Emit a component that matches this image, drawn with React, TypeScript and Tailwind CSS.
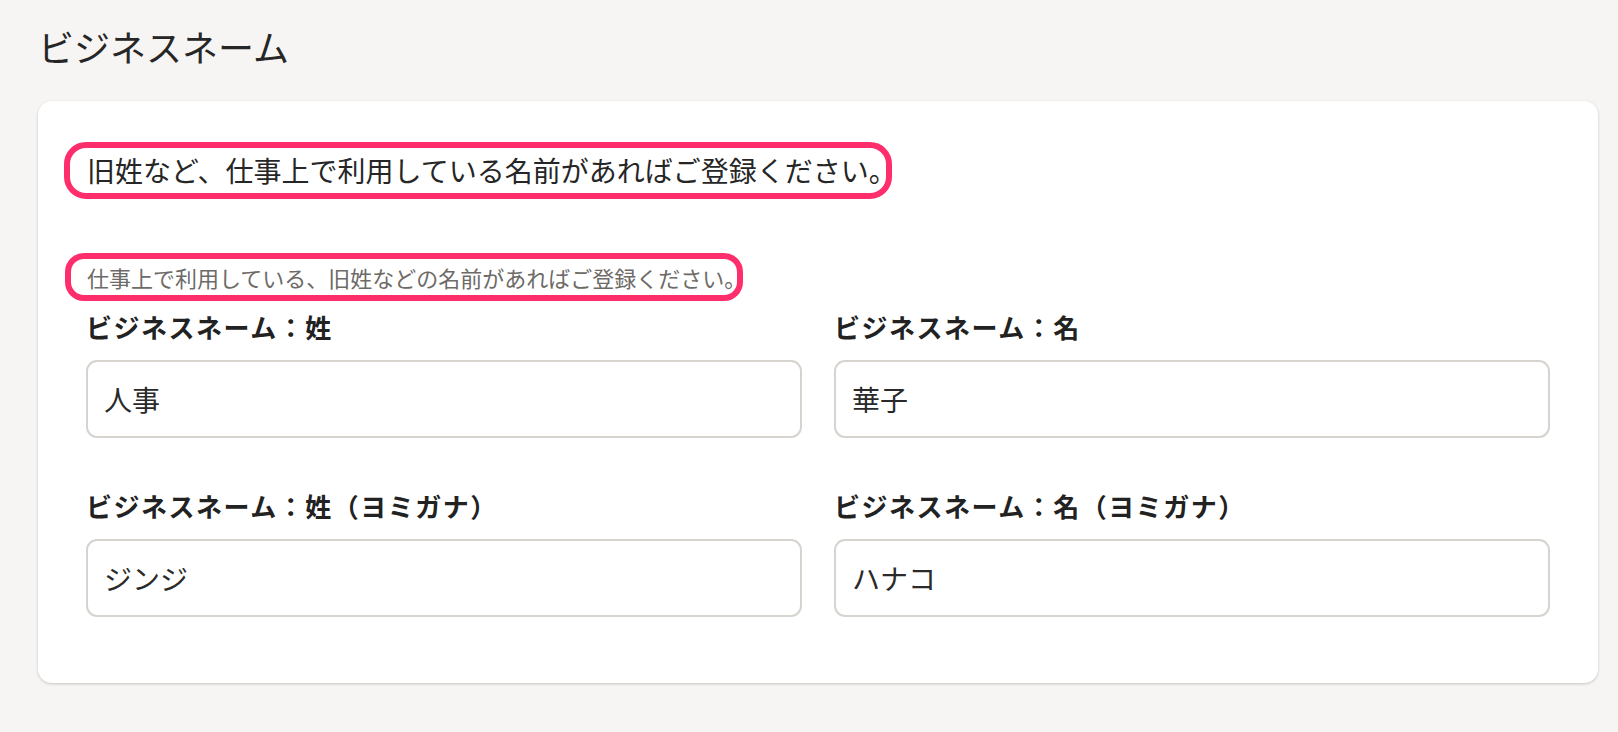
import React from "react";

const font = { fontFamily: '"Noto Sans CJK JP", "Noto Sans", sans-serif' };

function Field({ label, value }: { label: string; value: string }) {
  return (
    <div className="flex flex-col">
      <div className="text-[26px] font-bold leading-[36px] text-[#222222] tracking-[1.5px] whitespace-nowrap">{label}</div>
      <div className="mt-[15px] h-[78px] rounded-[11px] border-2 border-[#d7d3cf] bg-white pl-[16px] flex items-center text-[28px] text-[#2a2a2a]">
        {value}
      </div>
    </div>
  );
}

export default function App() {
  return (
    <div className="min-h-[732px] w-full bg-[#f6f5f3] pl-[38px] pr-[20px] pt-[22px] pb-[48px]" style={font}>
      <h1 className="text-[36px] font-normal leading-[48px] text-[#262626]">ビジネスネーム</h1>
      <div className="mt-[31px] rounded-[14px] bg-white px-[48px] pt-[41px] pb-[66px] shadow-[0_1px_3px_rgba(0,0,0,0.2)]">
        <div className="-ml-[22px] w-[828px] h-[57px] rounded-[22px] border-[6px] border-[#fe2e6d] pl-[17px] text-[28px] leading-[45px] text-[#262626] whitespace-nowrap">
          旧姓など、仕事上で利用している名前があればご登録ください。
        </div>
        <div className="mt-[54px] -ml-[21px] w-[678px] h-[48px] rounded-[19px] border-[6px] border-[#fe2e6d] pl-[16px] text-[22px] leading-[36px] text-[#6d6a67] whitespace-nowrap">
          仕事上で利用している、旧姓などの名前があればご登録ください。
        </div>
        <div className="mt-[8px] grid grid-cols-2 gap-x-[32px] gap-y-[50px]">
          <Field label="ビジネスネーム：姓" value="人事" />
          <Field label="ビジネスネーム：名" value="華子" />
          <Field label="ビジネスネーム：姓（ヨミガナ）" value="ジンジ" />
          <Field label="ビジネスネーム：名（ヨミガナ）" value="ハナコ" />
        </div>
      </div>
    </div>
  );
}
